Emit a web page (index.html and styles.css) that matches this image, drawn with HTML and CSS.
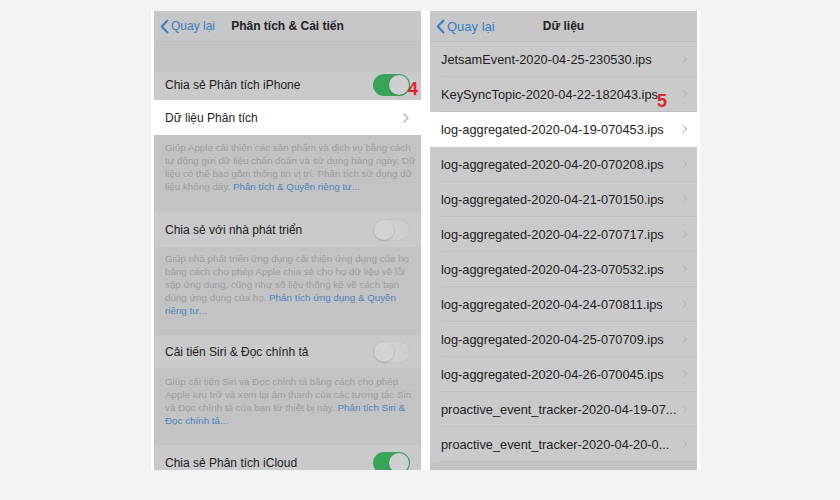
FILE: index.html
```html
<!DOCTYPE html>
<html lang="vi">
<head>
  <meta charset="UTF-8" />
  <meta name="viewport" content="width=device-width, initial-scale=1.0"/>
  <title>Phân tích & Cải tiến</title>
  <link rel="stylesheet" href="styles.css">
</head>
<body>
  <div class="shots">

    <!-- Màn hình 1 -->
    <div class="phone settings">
      <div class="nav">
        <span class="back">
          <svg width="9" height="15" viewBox="0 0 9 15"><polyline points="7.5,1.5 1.8,7.5 7.5,13.5" /></svg>
          Quay lại
        </span>
        <span class="title">Phân tích &amp; Cải tiến</span>
        <span></span>
      </div>
      <div class="spacer"></div>

      <div class="row first">
        <span>Chia sẻ Phân tích iPhone</span>
        <span class="toggle on"></span>
        <span class="step step-4">4</span>
      </div>
      <div class="row hl">
        <span>Dữ liệu Phân tích</span>
        <svg class="chev" width="6" height="10" viewBox="0 0 6 10"><polyline points="1,1 5,5 1,9" /></svg>
      </div>
      <p class="note n1">Giúp Apple cải thiện các sản phẩm và dịch vụ bằng cách<br>tự động gửi dữ liệu chẩn đoán và sử dụng hàng ngày. Dữ<br>liệu có thể bao gồm thông tin vị trí. Phân tích sử dụng dữ<br>liệu không dây. <a>Phân tích &amp; Quyền riêng tư...</a></p>

      <div class="row">
        <span>Chia sẻ với nhà phát triển</span>
        <span class="toggle"></span>
      </div>
      <p class="note n2">Giúp nhà phát triển ứng dụng cải thiện ứng dụng của họ<br>bằng cách cho phép Apple chia sẻ cho họ dữ liệu về lỗi<br>sập ứng dụng, cũng như số liệu thống kê về cách bạn<br>dùng ứng dụng của họ. <a>Phân tích ứng dụng &amp; Quyền<br>riêng tư...</a></p>

      <div class="row short">
        <span>Cải tiến Siri &amp; Đọc chính tả</span>
        <span class="toggle"></span>
      </div>
      <p class="note n3">Giúp cải tiến Siri và Đọc chính tả bằng cách cho phép<br>Apple lưu trữ và xem lại âm thanh của các tương tác Siri<br>và Đọc chính tả của bạn từ thiết bị này. <a>Phân tích Siri &amp;<br>Đọc chính tả...</a></p>

      <div class="row">
        <span>Chia sẻ Phân tích iCloud</span>
        <span class="toggle on"></span>
      </div>
    </div>

    <!-- Màn hình 2 -->
    <div class="phone data">
      <div class="nav">
        <span class="back">
          <svg width="9" height="15" viewBox="0 0 9 15"><polyline points="7.5,1.5 1.8,7.5 7.5,13.5" /></svg>
          Quay lại
        </span>
        <span class="title">Dữ liệu</span>
        <span></span>
      </div>
      <ul class="files">
        <li>JetsamEvent-2020-04-25-230530.ips</li>
        <li>KeySyncTopic-2020-04-22-182043.ips<span class="step step-5">5</span></li>
        <li class="hl">log-aggregated-2020-04-19-070453.ips</li>
        <li>log-aggregated-2020-04-20-070208.ips</li>
        <li>log-aggregated-2020-04-21-070150.ips</li>
        <li>log-aggregated-2020-04-22-070717.ips</li>
        <li>log-aggregated-2020-04-23-070532.ips</li>
        <li>log-aggregated-2020-04-24-070811.ips</li>
        <li>log-aggregated-2020-04-25-070709.ips</li>
        <li>log-aggregated-2020-04-26-070045.ips</li>
        <li>proactive_event_tracker-2020-04-19-07...</li>
        <li>proactive_event_tracker-2020-04-20-0...</li>
      </ul>
    </div>

  </div>
</body>
</html>
```

FILE: styles.css
```css
:root {
  --page-bg: #f2f3f5;
  --nav-bg: #c7c6c9;
  --group-bg: #c3c2c5;
  --row-bg: #cac9cc;
  --line: #bdbcbf;
  --text: #1e1e20;
  --note: #9c9b9f;
  --link: #4b86bd;
  --blue: #3a7ec2;
  --red: #e3262b;
  --green: #3aa35a;
}

body {
  margin: 0;
  padding-top: 11px;
  background-color: var(--page-bg);
  font-family: "Liberation Sans", Arial, sans-serif;
  color: var(--text);
}

.shots {
  display: flex;
  gap: 9px;
  width: fit-content;
  margin-left: 151px;
  padding: 0 3px;
  background-color: #fff;
}

.phone {
  position: relative;
  width: 267px;
  height: 459px;
  overflow: hidden;
  background-color: var(--group-bg);
}

/* thanh điều hướng */
.nav {
  display: grid;
  grid-template-columns: minmax(0, 1fr) auto minmax(0, 1fr);
  align-items: center;
  height: 30px;
  background-color: var(--nav-bg);
  border-bottom: 1px solid var(--line);
  font-size: 12px;
  white-space: nowrap;
}

.data .nav {
  font-size: 13px;
}

.back {
  display: flex;
  align-items: center;
  gap: 2px;
  padding-left: 6px;
  color: var(--blue);
}

.back svg polyline {
  fill: none;
  stroke: var(--blue);
  stroke-width: 2;
  stroke-linecap: round;
  stroke-linejoin: round;
}

.title {
  font-weight: bold;
  color: #222;
}

.data .title {
  font-size: 12px;
}

.spacer {
  height: 30px;
}

/* hàng cài đặt */
.row {
  position: relative;
  display: flex;
  align-items: center;
  justify-content: space-between;
  height: 35px;
  padding: 0 11px;
  background-color: var(--row-bg);
  font-size: 12px;
}

.row.first {
  height: 28px;
  padding-bottom: 2px;
  box-sizing: border-box;
}

.row.short {
  height: 33px;
}

.row.hl,
.files li.hl {
  background-color: #fff;
}

.chev polyline {
  fill: none;
  stroke: #b9b8bc;
  stroke-width: 1.5;
  stroke-linecap: round;
  stroke-linejoin: round;
}

.row .chev {
  margin-right: 1px;
}

/* công tắc */
.toggle {
  position: relative;
  width: 37px;
  height: 22px;
  border-radius: 11px;
  background-color: #cfced1;
  box-shadow: inset 0 0 0 1px #c3c2c5;
}

.toggle::after {
  content: "";
  position: absolute;
  top: 1px;
  left: 1px;
  width: 20px;
  height: 20px;
  border-radius: 50%;
  background-color: #d3d2d5;
  box-shadow: 0 1px 2px rgba(0, 0, 0, 0.18);
}

.toggle.on {
  background-color: var(--green);
  box-shadow: none;
}

.toggle.on::after {
  left: 16px;
  background-color: #cfcfd1;
}

/* chú thích */
.note {
  margin: 0;
  padding: 6px 4px 19px 11px;
  font-size: 9.8px;
  line-height: 13px;
  color: var(--note);
  white-space: nowrap;
}

.note.n2 {
  padding-top: 5px;
  padding-bottom: 18px;
}

.note.n3 {
  padding-top: 7px;
  padding-bottom: 18px;
}

.note a {
  color: var(--link);
}

/* số bước */
.step {
  position: absolute;
  font-weight: bold;
  font-size: 18px;
  line-height: 18px;
  color: var(--red);
}

.step-4 {
  right: 3px;
  top: 8px;
}

.step-5 {
  left: 227px;
  top: 15px;
}

/* danh sách tệp */
.files {
  margin: 0;
  padding: 0;
  list-style: none;
}

.files li {
  position: relative;
  display: flex;
  align-items: center;
  height: 35px;
  box-sizing: border-box;
  padding: 0 11px;
  background-color: var(--row-bg);
  font-size: 12.8px;
  white-space: nowrap;
}

.files li::before {
  content: "";
  position: absolute;
  left: 11px;
  right: 0;
  bottom: 0;
  border-bottom: 1px solid var(--line);
}

.files li.hl::before {
  border-bottom-color: #fff;
}

.files li::after {
  content: "";
  position: absolute;
  right: 11px;
  top: 14px;
  width: 5px;
  height: 5px;
  border-top: 1.5px solid #b9b8bc;
  border-right: 1.5px solid #b9b8bc;
  transform: rotate(45deg);
}
```
